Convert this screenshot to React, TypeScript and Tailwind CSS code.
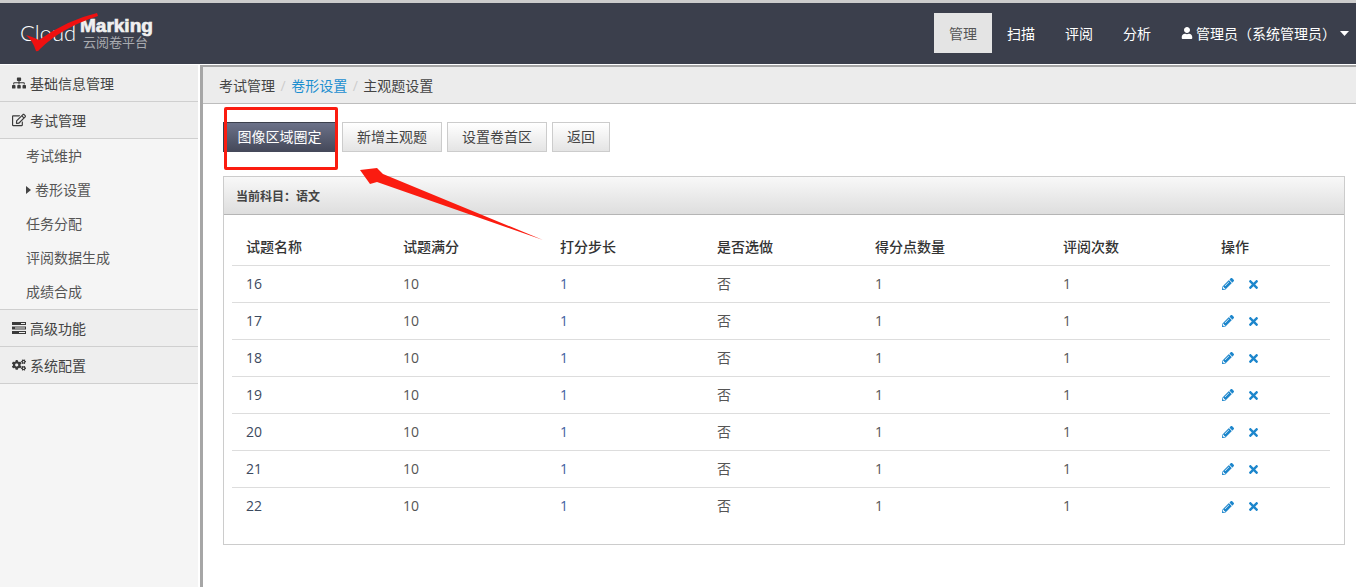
import { FaSitemap, FaRegEdit, FaCogs, FaUser, FaPencilAlt, FaTimes } from 'react-icons/fa'

const font = { fontFamily: '"Open Sans", "Noto Sans CJK SC", sans-serif' }

const columns = ['试题名称', '试题满分', '打分步长', '是否选做', '得分点数量', '评阅次数', '操作']
const widths = ['w-[157px]', 'w-[157px]', 'w-[157px]', 'w-[158px]', 'w-[188px]', 'w-[158px]', 'w-[109px]']
const rows = ['16', '17', '18', '19', '20', '21', '22']

function TasksIcon() {
  return (
    <svg width="14" height="12" viewBox="0 0 14 12" fill="#3a3a3a" aria-hidden="true">
      <path d="M0 0h14v3H0zM9 1v1h4V1zM0 4.500h14v3H0zM3 5.500v1h10v-1zM0 9h14v3H0zM7 10v1h6v-1z" fillRule="evenodd" />
    </svg>
  )
}

function Logo() {
  return (
    <div className="relative w-[150px] h-[60px] ml-[20px]">
      <span className="absolute left-0 top-[15px] text-[22px] leading-[30px] font-light text-white" style={{ fontFamily: 'Lato, sans-serif' }}>
        Cloud
      </span>
      <span
        className="absolute left-[60px] top-[15px] text-[19px] leading-[16px] font-bold text-[#f0f0f0] [-webkit-text-stroke:0.7px_#f0f0f0]"
        style={{ fontFamily: '"Liberation Sans", sans-serif' }}
      >
        Marking
      </span>
      <span className="absolute left-[63px] top-[31px] text-[13px] leading-[16px] text-[#a9abb0]" style={{ fontFamily: '"Noto Sans CJK SC", sans-serif' }}>
        云阅卷平台
      </span>
      <svg className="absolute left-[5px] top-[10px]" width="80" height="45" viewBox="0 0 80 45" aria-hidden="true">
        <path d="M1 22 Q8 28 11 38 Q13 39 15 36 Q36 15 73 3 L72 0 Q42 7 14 27 Q8 24 1 22z" fill="#f01010" />
      </svg>
    </div>
  )
}

function SideGroup({ icon, label }: { icon: React.ReactNode; label: string }) {
  return (
    <div className="h-[37px] flex items-center pl-[12px] gap-[4px] bg-[#eeeeee] border-b border-[#cfcfcf] text-[14px] text-[#444]">
      <span className="w-[14px] flex justify-center text-[#3a3a3a]">{icon}</span>
      {label}
    </div>
  )
}

function SideItem({ label, current }: { label: string; current?: boolean }) {
  return (
    <div className="h-[34px] flex items-center pl-[26px] pb-[1px] text-[14px] text-[#555]">
      {current && (
        <svg width="9" height="10" viewBox="0 0 9 10" fill="#444" aria-hidden="true">
          <path d="M0 1l5 4-5 4z" />
        </svg>
      )}
      {label}
    </div>
  )
}

function Button({ label, className }: { label: string; className: string }) {
  return (
    <button className={`h-[30px] pb-[2px] text-[14px] text-[#444] border border-[#cccccc] bg-gradient-to-b from-white to-[#e4e4e4] ${className}`}>
      {label}
    </button>
  )
}

export default function App() {
  return (
    <div className="relative w-[1356px] h-[587px] overflow-hidden bg-white" style={font}>
      <div className="h-[3px] bg-[#cccccc]" />
      <header className="h-[61px] bg-[#3b3f4c] flex items-start justify-between">
        <Logo />
        <nav className="flex items-center text-[14px] text-white mt-[10px]">
          <a className="w-[58px] h-[40px] flex items-center justify-center bg-[#e4e4e4] text-[#555]">管理</a>
          <a className="w-[58px] h-[40px] flex items-center justify-center">扫描</a>
          <a className="w-[58px] h-[40px] flex items-center justify-center">评阅</a>
          <a className="w-[58px] h-[40px] flex items-center justify-center">分析</a>
          <div className="flex items-center ml-[15px] w-[175px]">
            <FaUser className="w-[12px] h-[12px] mr-[3px]" aria-hidden="true" />
            <span>管理员（系统管理员）</span>
            <svg className="ml-[4px]" width="9" height="5" viewBox="0 0 9 5" fill="#fff" aria-hidden="true">
              <path d="M0 0h9L4.500 5z" />
            </svg>
          </div>
        </nav>
      </header>

      <div className="flex h-[523px] pt-[1px]">
        <aside className="w-[198px] bg-[#f5f5f5]">
          <SideGroup icon={<FaSitemap className="w-[14px] h-[14px]" />} label="基础信息管理" />
          <SideGroup icon={<FaRegEdit className="w-[14px] h-[14px]" />} label="考试管理" />
          <SideItem label="考试维护" />
          <SideItem label="卷形设置" current />
          <SideItem label="任务分配" />
          <SideItem label="评阅数据生成" />
          <div className="border-b border-[#cfcfcf]">
            <SideItem label="成绩合成" />
          </div>
          <SideGroup icon={<TasksIcon />} label="高级功能" />
          <SideGroup icon={<FaCogs className="w-[16px] h-[16px]" />} label="系统配置" />
        </aside>

        <main className="flex-1 ml-[2px] border-l-[3px] border-[#a6a6a6]">
          <div className="h-[39px] bg-[#ececec] border-t-[2px] border-b border-t-[#a6a6a6] border-b-[#bdbdbd] flex items-center pl-[16px] text-[14px] text-[#444]">
            <span>考试管理</span>
            <span className="mx-[5.500px] text-[#cccccc]">/</span>
            <span className="text-[#1c8fd0]">卷形设置</span>
            <span className="mx-[5.500px] text-[#cccccc]">/</span>
            <span>主观题设置</span>
          </div>

          <div className="flex mt-[18px] ml-[20px]">
            <button className="h-[30px] w-[112px] pb-[2px] text-[14px] text-white border-t border-l border-[#3b3f4c] bg-gradient-to-b from-[#6c7289] to-[#444859]">
              图像区域圈定
            </button>
            <Button label="新增主观题" className="w-[100px] ml-[7px]" />
            <Button label="设置卷首区" className="w-[100px] ml-[5px]" />
            <Button label="返回" className="w-[58px] ml-[5px]" />
          </div>

          <section className="mt-[24px] ml-[20px] w-[1122px] h-[369px] border border-[#cccccc]">
            <div className="h-[38px] px-[12px] pt-[2px] flex items-center text-[12px] font-bold text-[#444] bg-gradient-to-b from-[#f8f8f8] to-[#dedede] border-b border-[#b5b5b5]">
              当前科目：语文
            </div>
            <div className="ml-[8px] w-[1098px] mt-[13px]">
              <div className="flex h-[38px] items-center pl-[14px] border-b border-[#dddddd] text-[14px] font-medium text-[#333]">
                {columns.map((c, i) => (
                  <div key={c} className={widths[i]}>{c}</div>
                ))}
              </div>
              {rows.map((r) => (
                <div key={r} className="flex h-[37px] items-center pl-[14px] pb-[2px] border-b border-[#dddddd] last:border-b-0 text-[14px] text-[#555]">
                  <div className={`${widths[0]} text-[#3c4a5e]`}>{r}</div>
                  <div className={widths[1]}>10</div>
                  <div className={`${widths[2]} text-[#3f5f9f]`}>1</div>
                  <div className={widths[3]}>否</div>
                  <div className={widths[4]}>1</div>
                  <div className={widths[5]}>1</div>
                  <div className={`${widths[6]} flex items-center gap-[13px] pl-[1px] pt-[2px] text-[#1c86cc]`}>
                    <FaPencilAlt className="w-[12px] h-[12px]" aria-hidden="true" />
                    <FaTimes className="w-[13px] h-[13px]" aria-hidden="true" />
                  </div>
                </div>
              ))}
            </div>
          </section>
        </main>
      </div>

      {/* 红色标注 */}
      <div className="absolute left-[224px] top-[107px] w-[114px] h-[63px] border-[3px] border-[#fb1c10] rounded-[2px]" />
      <svg className="absolute left-[355px] top-[160px]" width="195" height="85" viewBox="0 0 195 85" aria-hidden="true">
        <path d="M5 10 L22 8 L28 14 L188 80 L22 22 L15 24z" fill="#fb1c10" />
      </svg>
    </div>
  )
}
